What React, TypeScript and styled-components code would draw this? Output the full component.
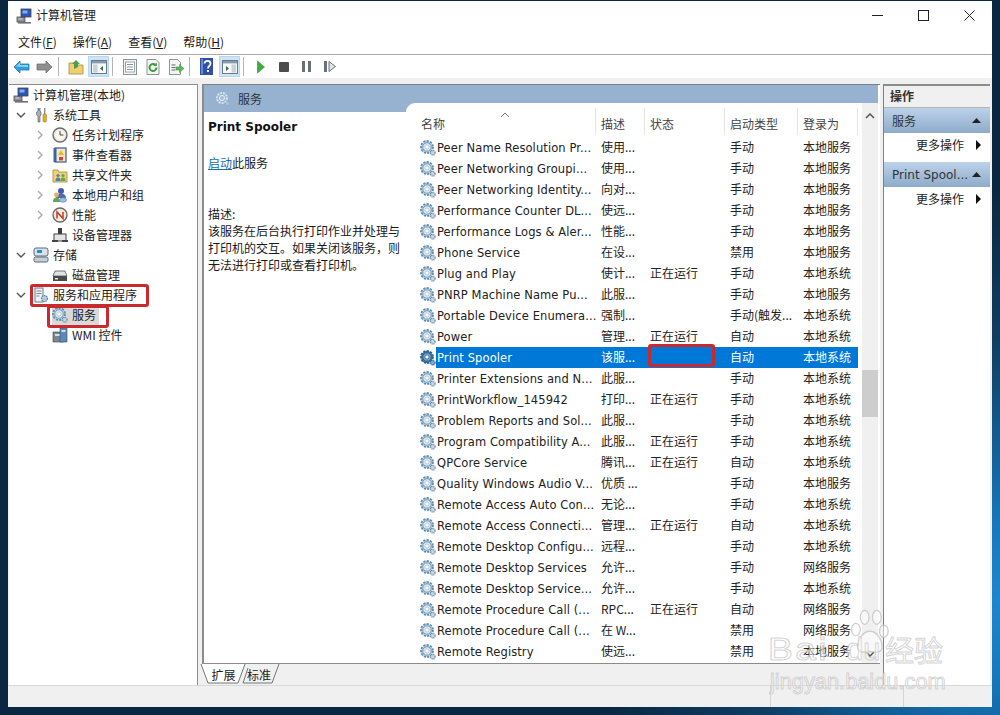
import React from 'react'
import styled, { createGlobalStyle } from 'styled-components'

const GlobalStyle = createGlobalStyle`
  html, body { margin:0; padding:0; height:715px; overflow:hidden; }
  body {
    background:
      radial-gradient(circle at 100% 84%, #1c86d0 0, #1679c0 70px, #0f3d62 260px, #0a2640 420px);
    font-family:"DejaVu Sans","Noto Sans CJK SC",sans-serif;
    font-size:12px;
    color:#1a1a1a;
  }
`

const Page = styled.div`
  position:relative;
  width:1000px;
  height:715px;
  padding:1px 8px 8px;
  box-sizing:border-box;
`

const Window = styled.div`
  height:100%;
  background:#f0f0f0;
  display:flex;
  flex-direction:column;
`

const TitleBar = styled.div`
  height:29px;
  flex:none;
  background:#fff;
  display:flex;
  align-items:center;
  padding-left:8px;
  gap:4px;
  font-family:"Noto Sans CJK SC",sans-serif;
  color:#222;
`

const TitleText = styled.span`
  margin-bottom:2px;
`

const WinButtons = styled.div`
  margin-left:auto;
  display:flex;
`

const WinButton = styled.div`
  width:46px;
  height:29px;
  display:flex;
  align-items:center;
  justify-content:center;
`

const MenuBar = styled.div`
  height:24px;
  flex:none;
  background:#fff;
  border-bottom:1px solid #a8a8a8;
  display:flex;
  align-items:center;
  padding-left:10px;
  gap:16px;
  font-family:"Noto Sans CJK SC",sans-serif;
  line-height:1;
  u { text-underline-offset:1px; }
`

const Toolbar = styled.div`
  height:23px;
  flex:none;
  background:#fff;
  display:flex;
  align-items:center;
  padding-left:2px;
`

const ToolButton = styled.div<{ $pressed?: boolean }>`
  width:${p => (p.$pressed ? 21 : 23)}px;
  height:${p => (p.$pressed ? 21 : 23)}px;
  margin:0 ${p => (p.$pressed ? 1 : 0)}px;
  display:flex;
  align-items:center;
  justify-content:center;
  background:${p => (p.$pressed ? '#cce4f7' : 'transparent')};
  border:${p => (p.$pressed ? '1px solid #b8d6ee' : '0')};
  box-sizing:border-box;
`

const ToolSep = styled.div`
  width:1px;
  height:19px;
  background:#b4b4b4;
  margin:0 5px 0 2px;
`

const Main = styled.div`
  flex:1;
  min-height:0;
  display:flex;
  padding-top:6px;
  padding-left:1px;
`

const TreePanel = styled.div`
  width:189px;
  flex:none;
  background:#fff;
  border-top:1px solid #8c8c8c;
  border-right:1px solid #8c8c8c;
  box-sizing:border-box;
  font-family:"Noto Sans CJK SC",sans-serif;
`

const TreeRowBox = styled.div<{ $level: number }>`
  position:relative;
  height:20px;
  display:flex;
  align-items:center;
  padding-left:${p => (p.$level === 0 ? 4 : p.$level === 1 ? 6 : 25)}px;
  color:#222;
`

const Chevron = styled.span`
  width:12px;
  height:12px;
  margin-right:6px;
  flex:none;
  display:flex;
  align-items:center;
  justify-content:center;
`

const TreeLabel = styled.span`
  margin-left:4px;
  line-height:18px;
  white-space:nowrap;
`

const ActiveBg = styled.span`
  display:flex;
  align-items:center;
  background:#d9d9d9;
  height:19px;
  padding-right:3px;
`

const RedBox = styled.span`
  position:absolute;
  border:3px solid #c92a2e;
  border-radius:3px;
  box-sizing:border-box;
  pointer-events:none;
  z-index:2;
`

const TreeRed = styled(RedBox)`
  left:21px;
  top:-1px;
  width:119px;
  height:23px;
`

const ServiceRed = styled(RedBox)`
  left:38px;
  top:0;
  width:62px;
  height:23px;
`

const StateRed = styled(RedBox)`
  left:3px;
  top:-3px;
  width:67px;
  height:23px;
`

const Center = styled.div`
  margin-left:4px;
  width:678px;
  flex:none;
  display:flex;
  flex-direction:column;
`

const CenterFrame = styled.div`
  flex:1;
  min-height:0;
  position:relative;
  background:#fff;
  border-top:1px solid #7f7f7f;
  border-left:2px solid #8c8c8c;
  border-bottom:1px solid #8c8c8c;
  display:flex;
  flex-direction:column;
`

const BlueHead = styled.div`
  height:27px;
  flex:none;
  margin-right:2px;
  background:#96b2d0;
  display:flex;
  align-items:center;
  gap:7px;
  padding-left:11px;
  font-family:"Noto Sans CJK SC",sans-serif;
  color:#333;
`

const CenterBody = styled.div`
  flex:1;
  min-height:0;
  display:flex;
`

const DescPanel = styled.div`
  width:202px;
  flex:none;
  padding:7px 0 0 4px;
  box-sizing:border-box;
  font-family:"Noto Sans CJK SC",sans-serif;
  line-height:17px;
`

const DescTitle = styled.div`
  font-family:"DejaVu Sans",sans-serif;
  font-weight:700;
  font-size:12px;
  line-height:16px;
  color:#111;
`

const StartLine = styled.div`
  margin-top:19px;
  a { color:#1a6ea8; text-decoration:underline; }
`

const DescText = styled.div`
  margin-top:34px;
  width:198px;
`

const ListPanel = styled.div`
  flex:1;
  min-width:0;
  margin-top:-9px;
  background:#fff;
  border-top-left-radius:9px;
  position:relative;
  display:flex;
`

const ListCol = styled.div`
  width:452px;
  flex:none;
  overflow:hidden;
`

const HeadRow = styled.div`
  height:34px;
  display:grid;
  grid-template-columns:180px 49px 80px 73px 60px;
  padding-left:10px;
  font-family:"Noto Sans CJK SC",sans-serif;
  color:#444;
  position:relative;
`

const HeadCell = styled.div`
  padding:5px 0 0 5px;
  margin-top:5px;
  height:27px;
  line-height:22px;
  border-right:1px solid #e4e4e4;
  box-sizing:border-box;
`

const SortMark = styled.svg`
  position:absolute;
  left:94px;
  top:9px;
`

const Row = styled.div<{ $selected?: boolean }>`
  height:21px;
  display:grid;
  grid-template-columns:21px 159px 49px 80px 73px 60px;
  margin-left:10px;
  align-items:stretch;
  white-space:nowrap;
  font-family:"Noto Sans CJK SC",sans-serif;
  line-height:19px;
  color:${p => (p.$selected ? '#fff' : '#222')};
  background:${p => (p.$selected ? 'linear-gradient(90deg,transparent 20px,#0078d7 20px)' : 'transparent')};
`

const NameCell = styled.div`
  font-family:"DejaVu Sans","Noto Sans CJK SC",sans-serif;
  font-size:11.5px;
  letter-spacing:.1px;
  padding-top:2px;
  overflow:hidden;
`

const IconCell = styled.div`
  display:flex;
  align-items:center;
  padding-left:4px;
`

const Cell = styled.div`
  padding-left:5px;
  position:relative;
`

const Scrollbar = styled.div`
  width:16px;
  margin-left:4px;
  flex:none;
  background:#f0f0f0;
  position:relative;
  display:flex;
  flex-direction:column;
  align-items:center;
`

const ScrollThumb = styled.div`
  position:absolute;
  left:0;
  right:0;
  top:267px;
  height:47px;
  background:#cdcdcd;
`

const ScrollArrow = styled.svg<{ $bottom?: boolean }>`
  margin-top:${p => (p.$bottom ? 'auto' : '10px')};
  margin-bottom:${p => (p.$bottom ? '6px' : '0')};
`

const TabStrip = styled.div`
  height:21px;
  flex:none;
  display:flex;
  font-family:"Noto Sans CJK SC",sans-serif;
`

const TabShape = styled.div<{ $active?: boolean }>`
  position:relative;
  width:${p => (p.$active ? 45 : 34)}px;
  margin-left:${p => (p.$active ? -1 : -4)}px;
  height:20px;
  display:flex;
  align-items:center;
  justify-content:center;
  color:#222;
  z-index:${p => (p.$active ? 1 : 0)};
  span { position:relative; }
  svg { position:absolute; left:0; top:0; overflow:visible; }
`

const ActionPanel = styled.div`
  margin-left:3px;
  flex:1;
  min-width:0;
  margin-right:2px;
  background:#fff;
  border-top:2px solid #8c8c8c;
  border-left:1px solid #7f7f7f;
  font-family:"Noto Sans CJK SC",sans-serif;
`

const ActionTitle = styled.div`
  height:21px;
  background:#f0f0f0;
  border-bottom:1px solid #b4b4b4;
  font-weight:700;
  line-height:19px;
  padding-left:6px;
  color:#333;
`

const ActionGroup = styled.div`
  height:25px;
  display:flex;
  align-items:center;
  justify-content:space-between;
  padding:0 9px 0 8px;
  background:linear-gradient(180deg,#bcd2ea,#8eabca);
  color:#333;
`

const GroupName = styled.span`
  font-family:"DejaVu Sans",sans-serif;
  font-size:12px;
  white-space:nowrap;
`

const ActionLink = styled.div`
  height:29px;
  padding-bottom:6px;
  box-sizing:border-box;
  display:flex;
  align-items:center;
  justify-content:flex-end;
  gap:12px;
  padding-right:9px;
  color:#222;
`

const StatusBar = styled.div`
  height:22px;
  flex:none;
  display:flex;
  border-top:1px solid #d9d9d9;
  box-sizing:border-box;
`

const StatusCell = styled.div<{ $w: number }>`
  width:${p => p.$w}px;
  flex:none;
  border-right:1px solid #d4d4d4;
  box-sizing:border-box;
`

const Watermark = styled.div`
  position:absolute;
  left:767px;
  top:606px;
  width:180px;
  height:90px;
  z-index:5;
  pointer-events:none;
  font-family:"Liberation Sans",sans-serif;
  color:rgba(255,255,255,.55);
  -webkit-text-stroke:1px rgba(190,190,190,.65);
`

const MarkBai = styled.div`
  position:absolute;
  left:1px;
  top:26px;
  font-size:31px;
  line-height:36px;
  letter-spacing:2px;
  transform:scaleX(1.2);
  transform-origin:0 50%;
`

const MarkDu = styled.div`
  position:absolute;
  left:79px;
  top:26px;
  font-size:31px;
  line-height:36px;
`

const MarkCn = styled.div`
  position:absolute;
  left:118px;
  top:25px;
  font-family:"Noto Sans CJK SC",sans-serif;
  font-size:29px;
  line-height:36px;
`

const MarkUrl = styled.div`
  position:absolute;
  left:3px;
  top:63px;
  font-size:21.8px;
  line-height:26px;
  white-space:nowrap;
`

const MarkPaw = styled.svg`
  position:absolute;
  left:82px;
  top:2px;
`

// toolbar + tree drawings
const Svg16: React.FC<{ children: React.ReactNode; w?: number; h?: number }> = ({ children, w = 16, h = 16 }) => (
  <svg width={w} height={h} viewBox={`0 0 ${w} ${h}`} style={{ flex: 'none', display: 'block' }}>{children}</svg>
)

const ChevronDown = () => (
  <Chevron><svg width="10" height="10" viewBox="0 0 10 10"><path d="M1 3l4 4 4-4" fill="none" stroke="#555" strokeWidth="1.4" /></svg></Chevron>
)
const ChevronRight = () => (
  <Chevron><svg width="10" height="10" viewBox="0 0 10 10"><path d="M3 1l4 4-4 4" fill="none" stroke="#aaa" strokeWidth="1.4" /></svg></Chevron>
)
const NoChevron = () => <Chevron />

const GearIcon = ({ dark }: { dark?: boolean }) => (
  <Svg16>
    <circle cx="7" cy="7" r="6" fill={dark ? '#3f78a8' : '#c4d6e4'} stroke={dark ? '#2a5f8c' : '#5f8cb0'} strokeWidth="1.8" strokeDasharray="2.2 1.2" />
    <circle cx="7" cy="7" r="4.2" fill={dark ? '#7fa9cc' : '#e6eff6'} stroke={dark ? '#2a5f8c' : '#6f95b2'} strokeWidth="1" />
    <circle cx="7" cy="7" r="2.1" fill="#fff" stroke={dark ? '#2a5f8c' : '#9db8cb'} strokeWidth=".8" />
    <circle cx="12.8" cy="12.800" r="2.3" fill={dark ? '#7fa9cc' : '#c6d6e2'} stroke={dark ? '#2a5f8c' : '#5f8098'} strokeWidth="1.1" strokeDasharray="1 .7" />
  </Svg16>
)

const HeadGearIcon = () => (
  <Svg16>
    <circle cx="7" cy="7" r="5" fill="none" stroke="#d6e2ee" strokeWidth="2" strokeDasharray="2 1" />
    <circle cx="7" cy="7" r="2.6" fill="#a8c0d8" stroke="#e8eff6" />
    <circle cx="12.500" cy="12.500" r="1.8" fill="#b4c8dc" stroke="#8ba6c2" strokeDasharray="1 .6" />
  </Svg16>
)

const ComputerIcon = () => (
  <Svg16>
    <rect x="1" y="9" width="8" height="5" fill="#8a8f98" stroke="#555" strokeWidth=".8" />
    <rect x="5" y="1" width="10" height="8" fill="#2b55b8" stroke="#444" strokeWidth=".8" />
    <rect x="6.5" y="2.5" width="5" height="3" fill="#7fb0ee" />
    <rect x="2" y="14" width="13" height="1.6" fill="#6c7078" />
    <rect x="2.5" y="10.5" width="4" height="1" fill="#d8dadd" />
  </Svg16>
)
const ToolsIcon = () => (
  <Svg16>
    <path d="M5 1v3l-1.4 1V8L5 9v6h2V9l1-1V5L7 4V1L6 3.5z" fill="#aab0b6" stroke="#555" strokeWidth=".6" />
    <rect x="11" y="1" width="1.4" height="6" fill="#8a8f96" />
    <rect x="10" y="7" width="3.4" height="8" rx="1" fill="#e8b020" stroke="#8b6a12" strokeWidth=".5" />
  </Svg16>
)
const ClockIcon = () => (
  <Svg16>
    <circle cx="8" cy="8" r="7" fill="#e8e8e4" stroke="#6d6d6d" strokeWidth="1.4" />
    <circle cx="8" cy="8" r="5" fill="#f8f6e8" />
    <path d="M8 4v4h3.4" fill="none" stroke="#444" strokeWidth="1" />
  </Svg16>
)
const EventIcon = () => (
  <Svg16>
    <rect x="3" y="1" width="11" height="14" fill="#efe7c8" stroke="#3c5a8c" strokeWidth="1.2" />
    <rect x="1.5" y="1" width="3" height="14" fill="#3a64a8" />
    <path d="M9 3l3 5H6z" fill="#eeb820" />
    <rect x="7" y="10" width="4" height="3.4" fill="#c8444a" />
  </Svg16>
)
const ShareIcon = () => (
  <Svg16>
    <path d="M1 3h5l1 2h8v10H1z" fill="#f0d272" stroke="#a58a30" strokeWidth=".8" />
    <circle cx="6" cy="8.5" r="1.6" fill="#4b80c8" />
    <path d="M3.5 14c0-2.4 1-3.4 2.5-3.4s2.5 1 2.5 3.4z" fill="#4b80c8" />
    <circle cx="11" cy="8.5" r="1.6" fill="#58a858" />
    <path d="M8.5 14c0-2.4 1-3.4 2.5-3.4s2.5 1 2.5 3.4z" fill="#58a858" />
  </Svg16>
)
const UsersIcon = () => (
  <Svg16>
    <circle cx="9" cy="4" r="3" fill="#3f5fa8" />
    <path d="M4 11c0-3 2-4.6 5-4.6s5 1.6 5 4.6z" fill="#4a6cb4" />
    <circle cx="4.5" cy="8" r="2.4" fill="#e0b060" />
    <path d="M1 15c0-3 1.4-4.4 3.5-4.4S8 12 8 15z" fill="#6da05c" />
    <ellipse cx="11" cy="13" rx="3.5" ry="2.2" fill="#9cc0e0" stroke="#5a80a8" strokeWidth=".6" />
  </Svg16>
)
const PerfIcon = () => (
  <Svg16>
    <circle cx="8" cy="8" r="7" fill="#f2ecd8" stroke="#6a6a6a" strokeWidth="1.4" />
    <path d="M5 11.500V5l6 6.500V5" fill="none" stroke="#c43a34" strokeWidth="1.5" />
  </Svg16>
)
const DeviceIcon = () => (
  <Svg16>
    <rect x="6" y="1" width="4" height="6" fill="#3c3c3c" />
    <rect x="2" y="7" width="12" height="7" fill="#e4e4e4" stroke="#444" strokeWidth="1" />
    <rect x="0" y="13" width="6" height="2" fill="#444" />
    <rect x="10" y="13" width="6" height="2" fill="#444" />
  </Svg16>
)
const StorageIcon = () => (
  <Svg16>
    <rect x="1" y="1" width="14" height="8" rx="2" fill="#d8e2ea" stroke="#5a6a78" strokeWidth="1" />
    <rect x="4" y="3" width="5" height="3" fill="#2a8ac8" />
    <rect x="1" y="10" width="14" height="5" rx="1.5" fill="#c4ced6" stroke="#5a6a78" strokeWidth="1" />
  </Svg16>
)
const DiskIcon = () => (
  <Svg16>
    <path d="M3 4h10l2 5H1z" fill="#dfe3e6" stroke="#555" strokeWidth=".8" />
    <rect x="1" y="9" width="14" height="5" fill="#4a4a4a" />
    <rect x="3" y="11" width="3" height="1.5" fill="#e6e6e6" />
  </Svg16>
)
const ServerGearIcon = () => (
  <Svg16>
    <rect x="2" y="1" width="8" height="14" fill="#eef1f4" stroke="#6c7c8a" strokeWidth="1" />
    <path d="M3.500 4h5M3.500 6.500h5M3.500 9h3" stroke="#7c8c9a" strokeWidth="1" />
    <circle cx="11.500" cy="11.500" r="3" fill="#b4cbe0" stroke="#4f7ea6" strokeWidth="1.2" strokeDasharray="1.4 .8" />
  </Svg16>
)
const WmiIcon = () => (
  <Svg16>
    <rect x="1" y="5" width="10" height="10" fill="#7a8694" stroke="#444" strokeWidth=".6" />
    <rect x="3" y="7" width="6" height="2" fill="#d8dfe6" />
    <rect x="8" y="1" width="7" height="14" fill="#5d89b4" stroke="#33506c" strokeWidth=".6" />
    <rect x="9.500" y="3" width="4" height="2" fill="#cfe0ee" />
  </Svg16>
)

const BackIcon = () => (
  <Svg16 w={17} h={14}>
    <path d="M1 7l6-6v3h9v6H7v3z" fill="#2f9fe0" stroke="#2377a8" strokeWidth=".8" />
    <path d="M3 6.500l4-4v2.500h8v2z" fill="#8fd4f6" />
  </Svg16>
)
const ForwardIcon = () => (
  <Svg16 w={17} h={14}>
    <path d="M16 7l-6-6v3H1v6h9v3z" fill="#8e8e8e" stroke="#6e6e6e" strokeWidth=".8" />
  </Svg16>
)
const UpIcon = () => (
  <Svg16>
    <path d="M1 4h5l1 2h8v9H1z" fill="#f0cf70" stroke="#a68a3a" strokeWidth=".8" />
    <path d="M6 10V5H4l4-4 4 4h-2v3z" fill="#4aa04a" />
  </Svg16>
)
const TreeToggleIcon = ({ right }: { right?: boolean }) => (
  <Svg16>
    <rect x=".5" y="1.500" width="15" height="13" fill="#f6f8fa" stroke="#6c7a88" />
    <rect x="1" y="2" width="14" height="2.400" fill="#8a9aaa" />
    <rect x={right ? 9.5 : 2} y="5.500" width="4.500" height="8" fill="#c6d2dc" />
    <path d={right ? 'M4 7v5l3-2.500z' : 'M12 7v5l-3-2.500z'} fill="#3d6e3d" />
  </Svg16>
)
const PropsIcon = () => (
  <Svg16>
    <rect x="1.500" y=".5" width="13" height="15" fill="#f4f4f4" stroke="#8a949c" />
    <rect x="3.500" y="3" width="9" height="10" fill="#fff" stroke="#9aa4ac" />
    <path d="M5 5.500h6M5 8h6M5 10.500h6" stroke="#8c98a2" />
  </Svg16>
)
const RefreshIcon = () => (
  <Svg16>
    <path d="M2 .5h9l3 3v12H2z" fill="#f4f4f4" stroke="#8a949c" />
    <path d="M11.500 8.500a3.500 3.500 0 1 1-1-2.500" fill="none" stroke="#3f9e3f" strokeWidth="2" />
    <path d="M11.800 3.500v3.600H8.200z" fill="#3f9e3f" />
  </Svg16>
)
const ExportIcon = () => (
  <Svg16>
    <path d="M1.500 .5h8l3 3v12h-11z" fill="#f6f6f0" stroke="#8a949c" />
    <path d="M3.500 6h4M3.500 8.500h4M3.500 11h4" stroke="#5a6a78" />
    <path d="M8 8h3.500V5.500L16 9.500l-4.500 4V11H8z" fill="#5cb85c" stroke="#3c8c3c" strokeWidth=".5" />
  </Svg16>
)
const HelpIcon = () => (
  <svg width="13" height="17" viewBox="0 0 13 17" style={{ display: 'block' }}>
    <rect width="13" height="17" fill="#2f4fa8" />
    <rect x="1" y="1" width="2" height="15" fill="#6d88cc" />
    <path d="M4.500 5.500c0-3.400 6-3.400 6 0 0 2.500-2.500 2.500-2.500 5" fill="none" stroke="#fff" strokeWidth="1.8" />
    <rect x="7" y="12" width="2" height="2" fill="#fff" />
  </svg>
)
const PlayIcon = () => <Svg16 w={8} h={14}><path d="M.5 1l7 6-7 6z" fill="#3fae3f" stroke="#2f8c2f" strokeWidth=".6" /></Svg16>
const StopIcon = () => <Svg16 w={10} h={10}><rect width="10" height="10" rx="1" fill="#4c4c4c" /></Svg16>
const PauseIcon = () => (
  <Svg16 w={9} h={11}>
    <rect width="3" height="11" fill="#6a7078" />
    <rect x="6" width="3" height="11" fill="#6a7078" />
  </Svg16>
)
const StepIcon = () => (
  <Svg16 w={12} h={11}>
    <rect width="3" height="11" fill="#6a7078" />
    <path d="M5 .5l6.500 5-6.500 5z" fill="#dfe3e8" stroke="#6a7078" />
  </Svg16>
)

type Tree = { label: string; level: number; icon: React.ReactNode; arrow: 'down' | 'right' | 'none' }

const tree: Tree[] = [
  { label: '计算机管理(本地)', level: 0, icon: <ComputerIcon />, arrow: 'none' },
  { label: '系统工具', level: 1, icon: <ToolsIcon />, arrow: 'down' },
  { label: '任务计划程序', level: 2, icon: <ClockIcon />, arrow: 'right' },
  { label: '事件查看器', level: 2, icon: <EventIcon />, arrow: 'right' },
  { label: '共享文件夹', level: 2, icon: <ShareIcon />, arrow: 'right' },
  { label: '本地用户和组', level: 2, icon: <UsersIcon />, arrow: 'right' },
  { label: '性能', level: 2, icon: <PerfIcon />, arrow: 'right' },
  { label: '设备管理器', level: 2, icon: <DeviceIcon />, arrow: 'none' },
  { label: '存储', level: 1, icon: <StorageIcon />, arrow: 'down' },
  { label: '磁盘管理', level: 2, icon: <DiskIcon />, arrow: 'none' },
  { label: '服务和应用程序', level: 1, icon: <ServerGearIcon />, arrow: 'down' },
  { label: '服务', level: 2, icon: <GearIcon />, arrow: 'none' },
  { label: 'WMI 控件', level: 2, icon: <WmiIcon />, arrow: 'none' },
]

const rows: string[][] = [
  ['Peer Name Resolution Pr...', '使用...', '', '手动', '本地服务'],
  ['Peer Networking Groupi...', '使用...', '', '手动', '本地服务'],
  ['Peer Networking Identity...', '向对...', '', '手动', '本地服务'],
  ['Performance Counter DL...', '使远...', '', '手动', '本地服务'],
  ['Performance Logs & Aler...', '性能...', '', '手动', '本地服务'],
  ['Phone Service', '在设...', '', '禁用', '本地服务'],
  ['Plug and Play', '使计...', '正在运行', '手动', '本地系统'],
  ['PNRP Machine Name Pu...', '此服...', '', '手动', '本地服务'],
  ['Portable Device Enumera...', '强制...', '', '手动(触发...', '本地系统'],
  ['Power', '管理...', '正在运行', '自动', '本地系统'],
  ['Print Spooler', '该服...', '', '自动', '本地系统'],
  ['Printer Extensions and N...', '此服...', '', '手动', '本地系统'],
  ['PrintWorkflow_145942', '打印...', '正在运行', '手动', '本地系统'],
  ['Problem Reports and Sol...', '此服...', '', '手动', '本地系统'],
  ['Program Compatibility A...', '此服...', '正在运行', '手动', '本地系统'],
  ['QPCore Service', '腾讯...', '正在运行', '自动', '本地系统'],
  ['Quality Windows Audio V...', '优质 ...', '', '手动', '本地服务'],
  ['Remote Access Auto Con...', '无论...', '', '手动', '本地系统'],
  ['Remote Access Connecti...', '管理...', '正在运行', '自动', '本地系统'],
  ['Remote Desktop Configu...', '远程...', '', '手动', '本地系统'],
  ['Remote Desktop Services', '允许...', '', '手动', '网络服务'],
  ['Remote Desktop Service...', '允许...', '', '手动', '本地系统'],
  ['Remote Procedure Call (...', 'RPC...', '正在运行', '自动', '网络服务'],
  ['Remote Procedure Call (...', '在 W...', '', '禁用', '网络服务'],
  ['Remote Registry', '使远...', '', '禁用', '本地服务'],
]

const TreeRow = ({ item }: { item: Tree }) => {
  const active = item.label === '服务'
  return (
    <TreeRowBox $level={item.level}>
      {item.level > 0 && (item.arrow === 'down' ? <ChevronDown /> : item.arrow === 'right' ? <ChevronRight /> : <NoChevron />)}
      {active ? (
        <ActiveBg>{item.icon}<TreeLabel>{item.label}</TreeLabel></ActiveBg>
      ) : (
        <>{item.icon}<TreeLabel>{item.label}</TreeLabel></>
      )}
      {item.label === '服务和应用程序' && <TreeRed />}
      {active && <ServiceRed />}
    </TreeRowBox>
  )
}

const App = () => {
  return (
    <Page>
      <GlobalStyle />
      <Window>
        <TitleBar>
          <ComputerIcon />
          <TitleText>计算机管理</TitleText>
          <WinButtons>
            <WinButton><svg width="11" height="11"><path d="M0 5.500h11" stroke="#222" /></svg></WinButton>
            <WinButton><svg width="11" height="11"><rect x=".5" y=".5" width="10" height="10" fill="none" stroke="#222" /></svg></WinButton>
            <WinButton><svg width="11" height="11"><path d="M.5.500l10 10M10.500.500l-10 10" stroke="#222" /></svg></WinButton>
          </WinButtons>
        </TitleBar>
        <MenuBar>
          <span>文件(<u>F</u>)</span>
          <span>操作(<u>A</u>)</span>
          <span>查看(<u>V</u>)</span>
          <span>帮助(<u>H</u>)</span>
        </MenuBar>
        <Toolbar>
          <ToolButton><BackIcon /></ToolButton>
          <ToolButton><ForwardIcon /></ToolButton>
          <ToolSep />
          <ToolButton><UpIcon /></ToolButton>
          <ToolButton $pressed><TreeToggleIcon /></ToolButton>
          <ToolSep />
          <ToolButton><PropsIcon /></ToolButton>
          <ToolButton><RefreshIcon /></ToolButton>
          <ToolButton><ExportIcon /></ToolButton>
          <ToolSep />
          <ToolButton><HelpIcon /></ToolButton>
          <ToolButton $pressed><TreeToggleIcon right /></ToolButton>
          <ToolSep />
          <ToolButton><PlayIcon /></ToolButton>
          <ToolButton><StopIcon /></ToolButton>
          <ToolButton><PauseIcon /></ToolButton>
          <ToolButton><StepIcon /></ToolButton>
        </Toolbar>
        <Main>
          <TreePanel>
            {tree.map(item => <TreeRow key={item.label} item={item} />)}
          </TreePanel>
          <Center>
            <CenterFrame>
              <BlueHead><HeadGearIcon />服务</BlueHead>
              <CenterBody>
                <DescPanel>
                  <DescTitle>Print Spooler</DescTitle>
                  <StartLine><a>启动</a>此服务</StartLine>
                  <DescText>
                    描述:<br />
                    该服务在后台执行打印作业并处理与打印机的交互。如果关闭该服务，则无法进行打印或查看打印机。
                  </DescText>
                </DescPanel>
                <ListPanel>
                  <ListCol>
                    <HeadRow>
                      <SortMark width="10" height="6" viewBox="0 0 10 6"><path d="M1 5l4-4 4 4" fill="none" stroke="#777" /></SortMark>
                      <HeadCell>名称</HeadCell>
                      <HeadCell>描述</HeadCell>
                      <HeadCell>状态</HeadCell>
                      <HeadCell>启动类型</HeadCell>
                      <HeadCell>登录为</HeadCell>
                    </HeadRow>
                    {rows.map(r => {
                      const selected = r[0] === 'Print Spooler'
                      return (
                        <Row key={r[0] + r[1]} $selected={selected}>
                          <IconCell><GearIcon dark={selected} /></IconCell>
                          <NameCell>{r[0]}</NameCell>
                          <Cell>{r[1]}</Cell>
                          <Cell>{r[2]}{selected && <StateRed />}</Cell>
                          <Cell>{r[3]}</Cell>
                          <Cell>{r[4]}</Cell>
                        </Row>
                      )
                    })}
                  </ListCol>
                  <Scrollbar>
                    <ScrollArrow width="10" height="6" viewBox="0 0 10 6"><path d="M1 5l4-4 4 4" fill="none" stroke="#555" strokeWidth="1.500" /></ScrollArrow>
                    <ScrollThumb />
                    <ScrollArrow $bottom width="10" height="6" viewBox="0 0 10 6"><path d="M1 1l4 4 4-4" fill="none" stroke="#555" strokeWidth="1.500" /></ScrollArrow>
                  </Scrollbar>
                </ListPanel>
              </CenterBody>
            </CenterFrame>
            <TabStrip>
              <TabShape $active>
                <svg width="45" height="20"><path d="M0 0l7 19h30l7-19" fill="#fff" stroke="#777" /></svg>
                <span>扩展</span>
              </TabShape>
              <TabShape>
                <svg width="38" height="20"><path d="M6 4L1 19h29l7-19" fill="none" stroke="#777" /></svg>
                <span>标准</span>
              </TabShape>
            </TabStrip>
          </Center>
          <ActionPanel>
            <ActionTitle>操作</ActionTitle>
            <ActionGroup>
              服务
              <svg width="9" height="5"><path d="M0 5l4.500-5 4.500 5z" fill="#222" /></svg>
            </ActionGroup>
            <ActionLink>更多操作<svg width="5" height="10"><path d="M0 0l5 5-5 5z" fill="#111" /></svg></ActionLink>
            <ActionGroup>
              <GroupName>Print Spool...</GroupName>
              <svg width="9" height="5"><path d="M0 5l4.500-5 4.500 5z" fill="#222" /></svg>
            </ActionGroup>
            <ActionLink>更多操作<svg width="5" height="10"><path d="M0 0l5 5-5 5z" fill="#111" /></svg></ActionLink>
          </ActionPanel>
        </Main>
        <StatusBar>
          <StatusCell $w={763} />
          <StatusCell $w={133} />
        </StatusBar>
      </Window>
      <Watermark>
        <MarkPaw width="40" height="50" viewBox="0 0 46 56">
          <g fill="rgba(255,255,255,.5)" stroke="rgba(190,190,190,.7)" strokeWidth="1.500">
            <ellipse cx="8" cy="24" rx="5" ry="7" />
            <ellipse cx="18" cy="10" rx="5" ry="8" />
            <ellipse cx="32" cy="10" rx="5" ry="8" />
            <ellipse cx="40" cy="26" rx="5" ry="7" />
            <path d="M24 26c8 0 14 10 14 18 0 8-10 6-14 5-4 1-14 3-14-5 0-8 6-18 14-18z" />
          </g>
        </MarkPaw>
        <MarkBai>Bai</MarkBai>
        <MarkDu>du</MarkDu>
        <MarkCn>经验</MarkCn>
        <MarkUrl>jingyan.baidu.com</MarkUrl>
      </Watermark>
    </Page>
  )
}

export default App
